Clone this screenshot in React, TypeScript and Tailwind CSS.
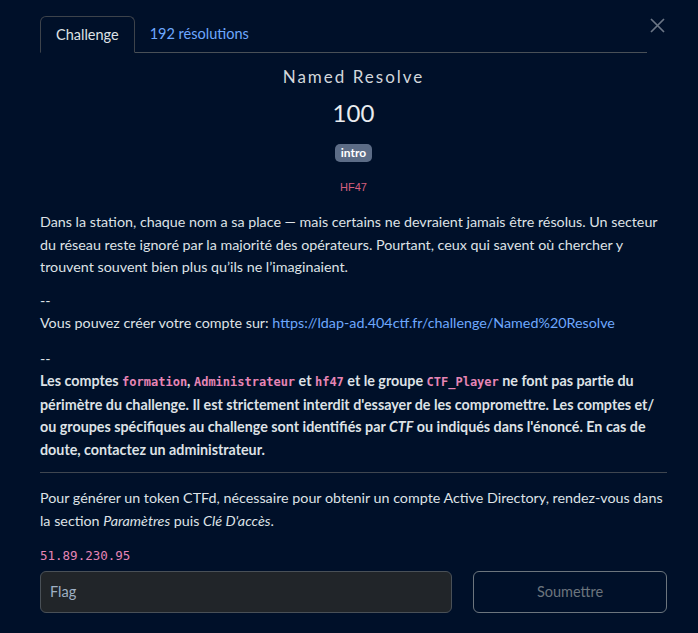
import React from "react";

const mono = { fontFamily: '"DejaVu Sans Mono", "Liberation Mono", monospace' };

function Code({ children }: { children: React.ReactNode }) {
  return (
    <code className="text-[12px] text-[#e685b5]" style={mono}>
      {children}
    </code>
  );
}

export default function App() {
  return (
    <div
      className="min-h-[633px] w-full bg-[#001029] text-[#dee2e6]"
      style={{ fontFamily: 'Lato, "Liberation Sans", sans-serif' }}
    >
      <div className="relative pl-[40px] pr-[31px] pt-[16px]">
        <button className="absolute right-[33px] top-[18px] text-[#6b7685]" aria-label="close">
          <svg width="15" height="15" viewBox="0 0 15 15">
            <path d="M1 1L14 14M14 1L1 14" stroke="currentColor" strokeWidth="1.7" />
          </svg>
        </button>
        <div className="mr-[20px] flex border-b border-[#495057]">
          <div className="-mb-px rounded-t-[6px] border border-[#3d434b] border-b-[#001029] bg-[#001029] px-[15px] py-[8px] text-[14.5px] leading-[19px] text-[#dee2e6]">
            Challenge
          </div>
          <div className="pl-[15px] pr-[15px] py-[8px] text-[14.5px] leading-[19px] text-[#6ea8fe]">
            192 résolutions
          </div>
        </div>

        <div className="flex flex-col items-center">
          <h3 className="mt-[13px] text-[17px] leading-[22px] tracking-[2px] text-[#d3d7dc]">
            Named Resolve
          </h3>
          <div className="mt-[10px] text-[24px] leading-[30px] text-[#e9ecef]">100</div>
          <span className="mt-[16px] rounded-[5px] bg-[#5c6c86] px-[6px] py-[2px] text-[12px] font-bold leading-[14px] text-white">
            intro
          </span>
          <span
            className="mt-[19px] text-[11px] leading-[12px] text-[#d65f7e]"
            style={{ fontFamily: '"Liberation Sans", Arial, sans-serif' }}
          >
            HF47
          </span>
        </div>

        <div className="mt-[18px] text-[14.3px] leading-[22.5px] text-[#dee2e6]">
          <p>
            Dans la station, chaque nom a sa place — mais certains ne devraient jamais être résolus. Un secteur du réseau reste ignoré par la majorité des opérateurs. Pourtant, ceux qui savent où chercher y trouvent souvent bien plus qu’ils ne l’imaginaient.
          </p>
          <p className="mt-[11px]">
            --
            <br />
            Vous pouvez créer votre compte sur:{" "}
            <a className="text-[#6ea8fe]">https://ldap-ad.404ctf.fr/challenge/Named%20Resolve</a>
          </p>
          <p className="mt-[13px]">--</p>
          <p className="font-bold">
            Les comptes <Code>formation</Code>, <Code>Administrateur</Code> et <Code>hf47</Code> et le groupe{" "}
            <Code>CTF_Player</Code> ne font pas partie du périmètre du challenge. Il est strictement interdit d'essayer de les compromettre. Les comptes et/<wbr />ou groupes spécifiques au challenge sont identifiés par <em>CTF</em> ou indiqués dans l'énoncé. En cas de doute, contactez un administrateur.
          </p>
          <hr className="mb-[14px] mt-[11px] border-[#3f4650]" />
          <p>
            Pour générer un token CTFd, nécessaire pour obtenir un compte Active Directory, rendez-vous dans la section <em>Paramètres</em> puis <em>Clé D'accès</em>.
          </p>
          <p className="mt-[14px] text-[12.5px] leading-[20px] text-[#e685b5]" style={mono}>
            51.89.230.95
          </p>
        </div>

        <div className="mt-[5px] flex gap-[21px]">
          <div className="flex h-[42px] flex-[0_0_412px] items-center rounded-[6px] border border-[#495057] bg-[#212529] px-[9px] text-[14.5px] text-[#9fb0c4]">
            Flag
          </div>
          <button className="h-[42px] flex-1 rounded-[6px] border border-[#6c757d] text-[14.5px] text-[#6c757d]">
            Soumettre
          </button>
        </div>
      </div>
    </div>
  );
}
